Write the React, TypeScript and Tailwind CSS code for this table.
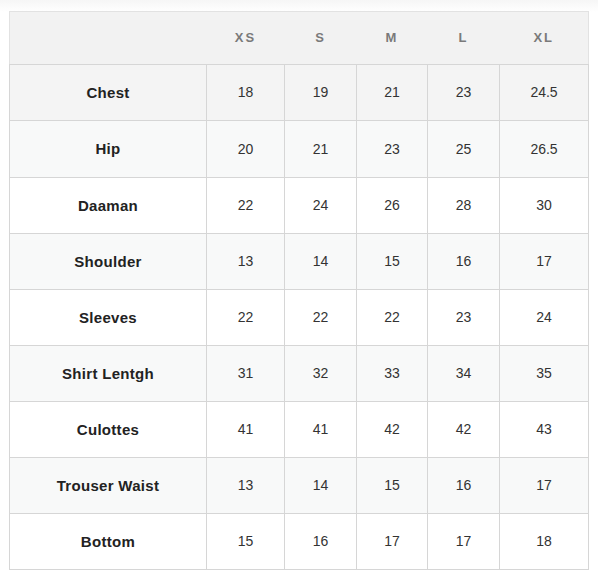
const sizes = ["XS", "S", "M", "L", "XL"];

const rows: { label: string; values: string[]; bg: string }[] = [
  { label: "Chest", values: ["18", "19", "21", "23", "24.5"], bg: "bg-[#f4f4f4]" },
  { label: "Hip", values: ["20", "21", "23", "25", "26.5"], bg: "bg-[#f8f9f9]" },
  { label: "Daaman", values: ["22", "24", "26", "28", "30"], bg: "bg-white" },
  { label: "Shoulder", values: ["13", "14", "15", "16", "17"], bg: "bg-[#f8f9f9]" },
  { label: "Sleeves", values: ["22", "22", "22", "23", "24"], bg: "bg-white" },
  { label: "Shirt Lentgh", values: ["31", "32", "33", "34", "35"], bg: "bg-[#f8f9f9]" },
  { label: "Culottes", values: ["41", "41", "42", "42", "43"], bg: "bg-white" },
  { label: "Trouser Waist", values: ["13", "14", "15", "16", "17"], bg: "bg-[#f8f9f9]" },
  { label: "Bottom", values: ["15", "16", "17", "17", "18"], bg: "bg-white" },
];

const colWidths = ["w-[197px]", "w-[78px]", "w-[72px]", "w-[71px]", "w-[72px]", "w-[89px]"];

export default function App() {
  return (
    <div className="min-h-[578px] w-[598px] bg-gradient-to-b from-[#f6f6f6] to-white to-[12px] pl-[9px] pt-[11px] font-['Liberation_Sans',Arial,sans-serif]">
      <table className="w-[580px] table-fixed border-collapse border border-[#e2e2e2] text-center text-sm">
        <colgroup>
          {colWidths.map((w, i) => (
            <col key={i} className={w} />
          ))}
        </colgroup>
        <thead>
          <tr className="h-[53px] border-b border-[#d4d4d4] bg-[#f2f2f2]">
            <th />
            {sizes.map((s) => (
              <th
                key={s}
                className="text-[13px] font-bold tracking-[2px] text-[#7a7a7a]"
              >
                {s}
              </th>
            ))}
          </tr>
        </thead>
        <tbody>
          {rows.map((row) => (
            <tr
              key={row.label}
              className={`${row.label === "Hip" ? "h-[57px]" : "h-[56px]"} ${row.bg}`}
            >
              <td className="border border-[#d6d6d6] text-[15px] font-bold tracking-[0.3px] text-[#222]">
                {row.label}
              </td>
              {row.values.map((v, i) => (
                <td key={i} className="border border-[#d6d6d6] pb-[1px] text-[#333]">
                  {v}
                </td>
              ))}
            </tr>
          ))}
        </tbody>
      </table>
    </div>
  );
}
